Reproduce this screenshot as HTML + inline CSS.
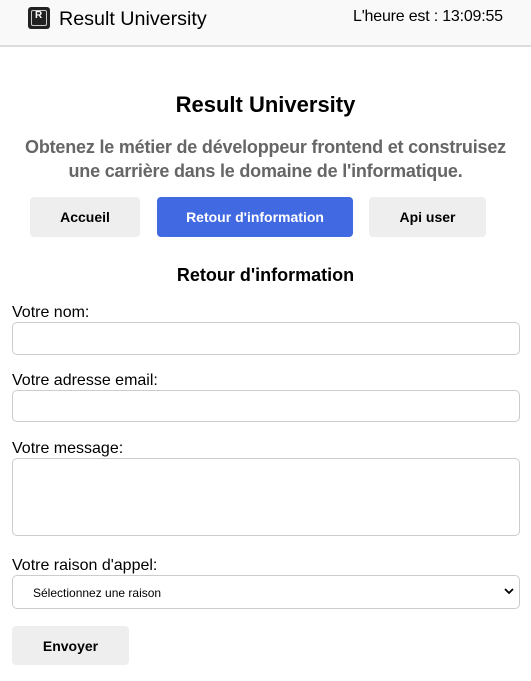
<!DOCTYPE html><html><head><style>
*{box-sizing:border-box;margin:0;padding:0}
body{width:531px;height:681px;background:#fff;font-family:"Liberation Sans",sans-serif;color:#000;position:relative;overflow:hidden}
.a{position:absolute}
.hdr{left:0;top:0;width:531px;height:47px;background:#f9f9f9;border-bottom:2px solid #ddd}
.btn{position:absolute;background:#eee;border-radius:4px;font-weight:bold;font-size:14px;display:flex;align-items:center;justify-content:center}
.in{position:absolute;left:12px;width:508px;border:1px solid #ccc;border-radius:5px;background:#fff}
.lb{position:absolute;left:12px;font-size:16px}
</style></head><body>
<div class="a hdr"></div>
<div class="a" style="left:28px;top:7px;width:22px;height:22px;background:#222;border-radius:3px"><div style="position:absolute;left:3px;top:3px;width:16px;height:16px;border:1px solid #ccc;border-radius:2px;color:#fff;font-size:10px;font-weight:bold;line-height:10px;padding-left:3px">R</div></div>
<div class="a" style="left:59px;top:8px;font-size:19.7px">Result University</div>
<div class="a" style="left:353px;top:8px;font-size:16px;letter-spacing:-0.2px">L'heure est : 13:09:55</div>
<div class="a" style="left:0;width:531px;top:92px;text-align:center;font-size:22px;font-weight:bold">Result University</div>
<div class="a" style="left:0;width:531px;top:135px;text-align:center;font-size:18px;font-weight:bold;color:#666;line-height:24px;letter-spacing:-0.2px">Obtenez le métier de développeur frontend et construisez<br>une carrière dans le domaine de l'informatique.</div>
<div class="btn" style="left:30px;top:197px;width:110px;height:40px">Accueil</div>
<div class="btn" style="left:157px;top:197px;width:196px;height:40px;background:#4169e1;color:#fff">Retour d'information</div>
<div class="btn" style="left:369px;top:197px;width:117px;height:40px">Api user</div>
<div class="a" style="left:0;width:531px;top:265px;text-align:center;font-size:18px;font-weight:bold">Retour d'information</div>
<div class="lb" style="top:304px">Votre nom:</div>
<div class="in" style="top:322px;height:33px"></div>
<div class="lb" style="top:372px">Votre adresse email:</div>
<div class="in" style="top:390px;height:32px"></div>
<div class="lb" style="top:440px">Votre message:</div>
<div class="in" style="top:458px;height:78px"></div>
<div class="lb" style="top:557px">Votre raison d'appel:</div>
<div class="in" style="top:575px;height:34px;font-size:12px;padding:10px 0 0 20px">Sélectionnez une raison<svg style="position:absolute;right:5px;top:12px" width="10" height="7" viewBox="0 0 10 7"><path d="M1 1L5 5L9 1" stroke="#000" stroke-width="1.8" fill="none"/></svg></div>
<div class="btn" style="left:12px;top:626px;width:117px;height:39px">Envoyer</div>
</body></html>
